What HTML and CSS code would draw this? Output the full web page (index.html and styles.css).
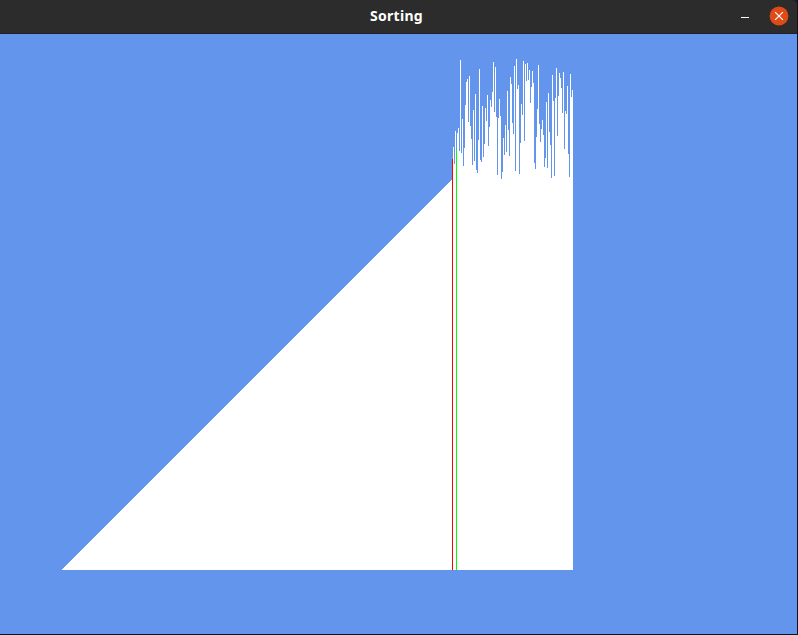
FILE: index.html
```html
<!DOCTYPE html>
<html lang="en">
<head>
<meta charset="utf-8">
<title>Sorting</title>
<link rel="stylesheet" href="styles.css">
</head>
<body>
<div class="window">
  <header class="titlebar">
    <span class="spacer"></span>
    <h1 class="title">Sorting</h1>
    <div class="controls">
      <button class="minimize" aria-label="Minimize"></button>
      <button class="close" aria-label="Close">
        <svg width="20" height="20" viewBox="0 0 20 20"><circle cx="10" cy="10" r="9.4" fill="#df4a16"/><path d="M6.1 6.1l7.8 7.8M13.9 6.1l-7.8 7.8" stroke="#fff" stroke-width="1.2"/></svg>
      </button>
    </div>
  </header>
  <main class="canvas"><div class="bars" id="bars"></div></main>
</div>
<script src="bars.js"></script>
</body>
</html>
```
FILE: styles.css
```css
* { box-sizing: border-box; }
body { margin: 0; background: #1a1a2c; }
.window {
  display: flex;
  flex-direction: column;
  width: 798px;
  height: 635px;
  border: solid #11111f;
  border-width: 0 1px 1px 0;
  overflow: hidden;
}
.titlebar {
  display: grid;
  grid-template-columns: 1fr auto 1fr;
  align-items: center;
  height: 34px;
  padding: 0 8px 2px 4px;
  background: #2c2c2c;
  border-bottom: 1px solid #221f2a;
  border-top-right-radius: 5px;
}
.title {
  margin: 0;
  color: #fff;
  font: bold 14px/20px "Noto Sans", "Open Sans", sans-serif;
  letter-spacing: 0.3px;
}
.controls {
  display: flex;
  justify-content: flex-end;
  align-items: center;
  gap: 20px;
}
.controls button { padding: 0; border: 0; background: none; }
.controls .minimize { width: 8px; height: 1px; margin-top: 4px; background: #fff; }
.close { height: 20px; }
.close svg { display: block; }
.canvas {
  display: flex;
  align-items: flex-end;
  flex: 1;
  padding: 0 0 64px 62px;
  background: #6495ed;
}
.bars { display: flex; align-items: flex-end; }
.bar { width: 1px; background: #fff; }
.bar.current { background: #f00; }
.bar.compare { background: #0f0; }
```
FILE: bars.js
```js
// The first 390 values are already in order; the rest are still shuffled.
const SORTED = 390;
const BASE = 570;
const tops = [
  159,147,164,131,150,133,128,151,60,153,119,166,148,105,82,79,122,76,126,139,
  165,110,161,94,170,173,140,69,160,162,106,157,144,108,121,95,146,127,100,107,
  92,62,112,67,117,175,118,99,116,179,172,138,155,125,152,91,130,156,77,84,
  123,134,66,171,59,89,85,174,143,104,115,61,141,64,81,63,80,70,103,87,
  71,83,163,169,137,109,65,124,142,129,120,135,167,158,102,168,93,132,145,178,
  75,101,176,98,68,136,96,73,78,88,113,72,149,111,114,86,154,177,74,97,90
];
const values = Array.from({ length: SORTED }, (_, i) => i + 1)
  .concat(tops.map(top => BASE - top));
const container = document.getElementById("bars");
values.forEach((value, i) => {
  const bar = document.createElement("div");
  bar.className = "bar";
  if (i === SORTED) bar.classList.add("current");
  if (i === SORTED + 4) bar.classList.add("compare");
  bar.style.height = value + "px";
  container.appendChild(bar);
});
```
